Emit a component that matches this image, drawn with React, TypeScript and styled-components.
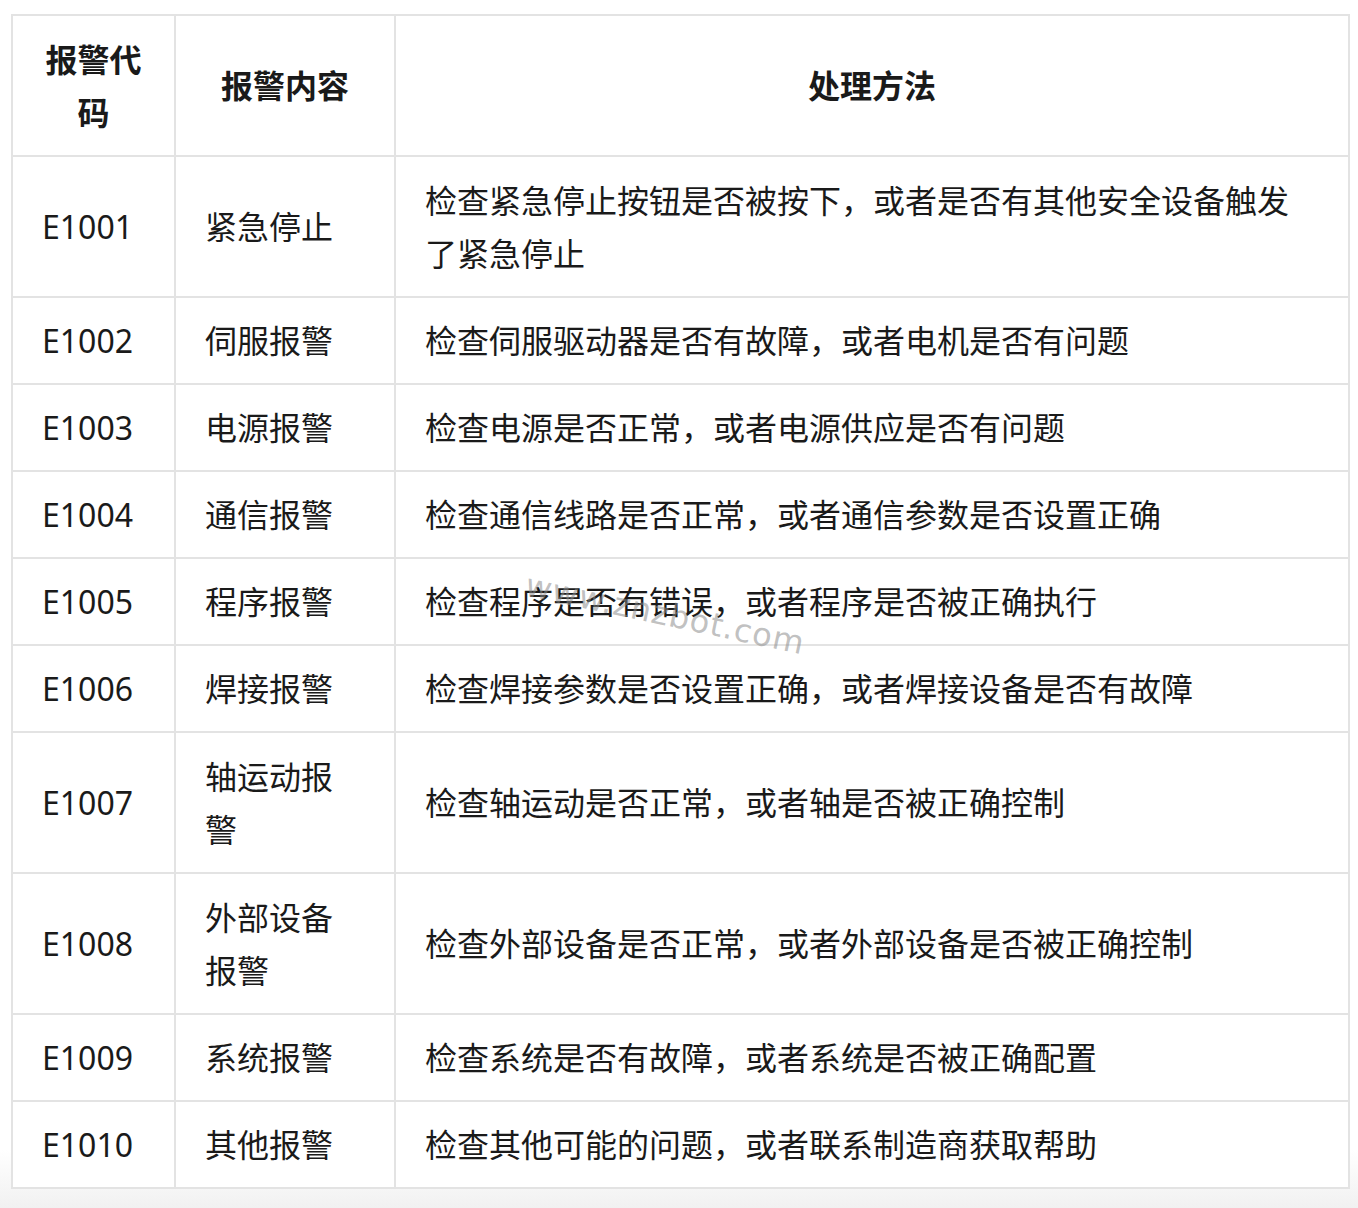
import React from "react";
import styled, { createGlobalStyle } from "styled-components";

const Global = createGlobalStyle`
  html, body { margin: 0; background: #fff; }
  body { font-family: "Noto Sans", "Noto Sans CJK SC", sans-serif; color: #1a1a1a; }
`;

const Page = styled.div`
  position: relative;
  width: 1358px;
  height: 1208px;
  padding: 14px 10px 0 11px;
  box-sizing: border-box;
  background: linear-gradient(to bottom, #fff 0, #fff 1150px, #f1f1f1 1208px);
`;

const Table = styled.table`
  border-collapse: collapse;
  width: 1337px;
  background: #fff;
  font-size: 32px;
  line-height: 53px;
  table-layout: fixed;
`;

const Th = styled.th<{ w: number }>`
  width: ${(p) => p.w}px;
  border: 2px solid #e3e3e3;
  font-weight: 700;
  text-align: center;
  padding: 12px 28px;
  height: 141px;
  box-sizing: border-box;
`;

const Td = styled.td<{ tall?: boolean }>`
  border: 2px solid #e3e3e3;
  padding: 12px 36px 12px 29px;
  height: ${(p) => (p.tall ? 141 : 87)}px;
  box-sizing: border-box;
  vertical-align: middle;
`;

const Watermark = styled.div`
  position: absolute;
  left: 530px;
  top: 566px;
  font-size: 32px;
  color: rgba(140, 140, 140, 0.55);
  font-family: "DejaVu Sans", sans-serif;
  transform: rotate(12deg);
  transform-origin: left top;
  letter-spacing: 1px;
  pointer-events: none;
`;

const rows: [string, string, string, boolean?][] = [
  ["E1001", "紧急停止", "检查紧急停止按钮是否被按下，或者是否有其他安全设备触发了紧急停止", true],
  ["E1002", "伺服报警", "检查伺服驱动器是否有故障，或者电机是否有问题"],
  ["E1003", "电源报警", "检查电源是否正常，或者电源供应是否有问题"],
  ["E1004", "通信报警", "检查通信线路是否正常，或者通信参数是否设置正确"],
  ["E1005", "程序报警", "检查程序是否有错误，或者程序是否被正确执行"],
  ["E1006", "焊接报警", "检查焊接参数是否设置正确，或者焊接设备是否有故障"],
  ["E1007", "轴运动报警", "检查轴运动是否正常，或者轴是否被正确控制", true],
  ["E1008", "外部设备报警", "检查外部设备是否正常，或者外部设备是否被正确控制", true],
  ["E1009", "系统报警", "检查系统是否有故障，或者系统是否被正确配置"],
  ["E1010", "其他报警", "检查其他可能的问题，或者联系制造商获取帮助"],
];

export default function App() {
  return (
    <Page>
      <Global />
      <Table>
        <thead>
          <tr>
            <Th w={163}>报警代码</Th>
            <Th w={220}>报警内容</Th>
            <Th w={954}>处理方法</Th>
          </tr>
        </thead>
        <tbody>
          {rows.map(([c, n, m, t]) => (
            <tr key={c}>
              <Td tall={t}>{c}</Td>
              <Td tall={t}>{n}</Td>
              <Td tall={t}>{m}</Td>
            </tr>
          ))}
        </tbody>
      </Table>
      <Watermark>www.znzbot.com</Watermark>
    </Page>
  );
}
